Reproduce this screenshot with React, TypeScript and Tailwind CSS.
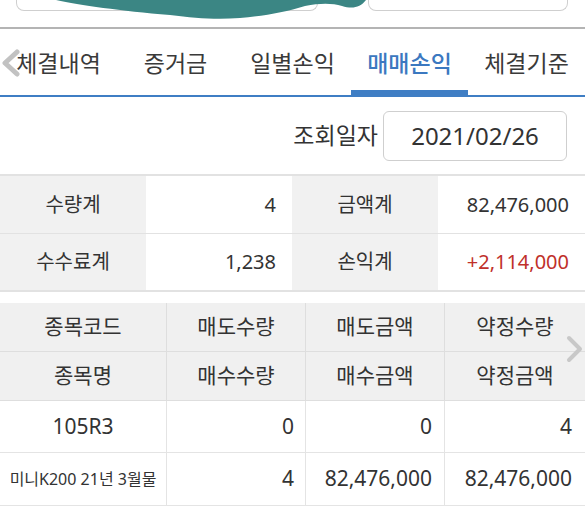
const font = { fontFamily: '"Noto Sans", "Noto Sans CJK KR", sans-serif' };

const tabs = ["체결내역", "증거금", "일별손익", "매매손익", "체결기준"];

export default function App() {
  return (
    <div className="w-[585px] h-[506px] bg-white text-[#333] overflow-hidden" style={font}>
      {/* top cut-off inputs */}
      <div className="relative h-[29px] border-b-2 border-[#b4b4b4] flex pl-4 gap-[50px]">
        <div className="w-[302px] h-[11px] border-x border-b border-[#cfcfcf] rounded-b-lg" />
        <div className="w-[200px] h-[11px] border-x border-b border-[#cfcfcf] rounded-b-lg" />
        <svg className="absolute left-0 top-0" width="380" height="22" viewBox="0 0 380 22">
          <path
            d="M56,0 C80,5 120,11 170,15 C195,18 215,20 240,18 C265,16 285,12 305,6 C320,3 332,3 342,6 C352,9 360,8 366,0 Z"
            fill="#3b8684"
          />
        </svg>
      </div>

      {/* tabs */}
      <div className="relative h-[68px] flex items-center border-b-2 border-[#3f7ec4]">
        <svg className="absolute left-0 top-[20px]" width="22" height="28" viewBox="0 0 22 28">
          <polyline points="17,3 5,14 17,25" fill="none" stroke="#c2c2c2" strokeWidth="5" strokeLinejoin="round" strokeLinecap="round" />
        </svg>
        {tabs.map((t, i) => (
          <div
            key={t}
            className={`relative w-[117px] h-full flex items-center justify-center pt-[3px] text-[23px] ${
              i === 3 ? "text-[#3b78c0] font-medium" : "text-[#3a3a3a]"
            }`}
          >
            {t}
            {i === 3 && <div className="absolute left-0 right-0 bottom-0 h-[5px] bg-[#3f7ec4]" />}
          </div>
        ))}
      </div>

      {/* date row */}
      <div className="h-[77px] flex items-center justify-end pr-[18px] gap-[5px]">
        <span className="text-[23px] text-[#333]">조회일자</span>
        <div className="w-[184px] h-[50px] border border-[#cfcfcf] rounded-md flex items-center justify-center text-[24px] text-[#333]">
          2021/02/26
        </div>
      </div>

      {/* summary */}
      <div className="border-t-2 border-[#e2e2e2] grid grid-cols-[146px_146px_146px_147px] text-[20px]">
        <div className="h-[58px] bg-[#f1f1f1] flex items-center justify-center border-b border-[#e2e2e2]">수량계</div>
        <div className="h-[58px] flex items-center justify-end pr-4 border-b border-[#e2e2e2]">4</div>
        <div className="h-[58px] bg-[#f1f1f1] flex items-center justify-center border-b border-[#e2e2e2]">금액계</div>
        <div className="h-[58px] flex items-center justify-end pr-4 border-b border-[#e2e2e2]">82,476,000</div>
        <div className="h-[58px] bg-[#f1f1f1] flex items-center justify-center border-b-2 border-[#e2e2e2]">수수료계</div>
        <div className="h-[58px] flex items-center justify-end pr-4 border-b-2 border-[#e2e2e2]">1,238</div>
        <div className="h-[58px] bg-[#f1f1f1] flex items-center justify-center border-b-2 border-[#e2e2e2]">손익계</div>
        <div className="h-[58px] flex items-center justify-end pr-4 border-b-2 border-[#e2e2e2] text-[#c0302a]">+2,114,000</div>
      </div>

      {/* detail grid */}
      <div className="relative mt-[11px] grid grid-cols-[167px_139px_139px_140px] text-[21px]">
        {["종목코드", "매도수량", "매도금액", "약정수량"].map((h, i) => (
          <div
            key={h}
            className={`h-[49px] bg-[#f0f0f0] flex items-center justify-center border-b border-[#dedede] ${i < 3 ? "border-r" : ""}`}
          >
            {h}
          </div>
        ))}
        {["종목명", "매수수량", "매수금액", "약정금액"].map((h, i) => (
          <div
            key={h}
            className={`h-[49px] bg-[#f0f0f0] flex items-center justify-center border-b border-[#dedede] ${i < 3 ? "border-r" : ""}`}
          >
            {h}
          </div>
        ))}
        <div className="h-[52px] flex items-center justify-center border-b border-r border-[#e4e4e4]">105R3</div>
        <div className="h-[52px] flex items-center justify-end pr-[11px] border-b border-r border-[#e4e4e4]">0</div>
        <div className="h-[52px] flex items-center justify-end pr-[12px] border-b border-r border-[#e4e4e4]">0</div>
        <div className="h-[52px] flex items-center justify-end pr-[13px] border-b border-[#e4e4e4]">4</div>
        <div className="h-[53px] flex items-center justify-center border-b border-r border-[#e4e4e4] text-[16px]">미니K200 21년 3월물</div>
        <div className="h-[53px] flex items-center justify-end pr-[11px] border-b border-r border-[#e4e4e4]">4</div>
        <div className="h-[53px] flex items-center justify-end pr-[12px] border-b border-r border-[#e4e4e4]">82,476,000</div>
        <div className="h-[53px] flex items-center justify-end pr-[13px] border-b border-[#e4e4e4]">82,476,000</div>
        <svg className="absolute left-[564px] top-[31px]" width="21" height="30" viewBox="0 0 21 30">
          <polyline points="5,4 16,15 5,26" fill="none" stroke="#c8c8c8" strokeWidth="4" strokeLinejoin="round" strokeLinecap="round" />
        </svg>
      </div>
    </div>
  );
}
